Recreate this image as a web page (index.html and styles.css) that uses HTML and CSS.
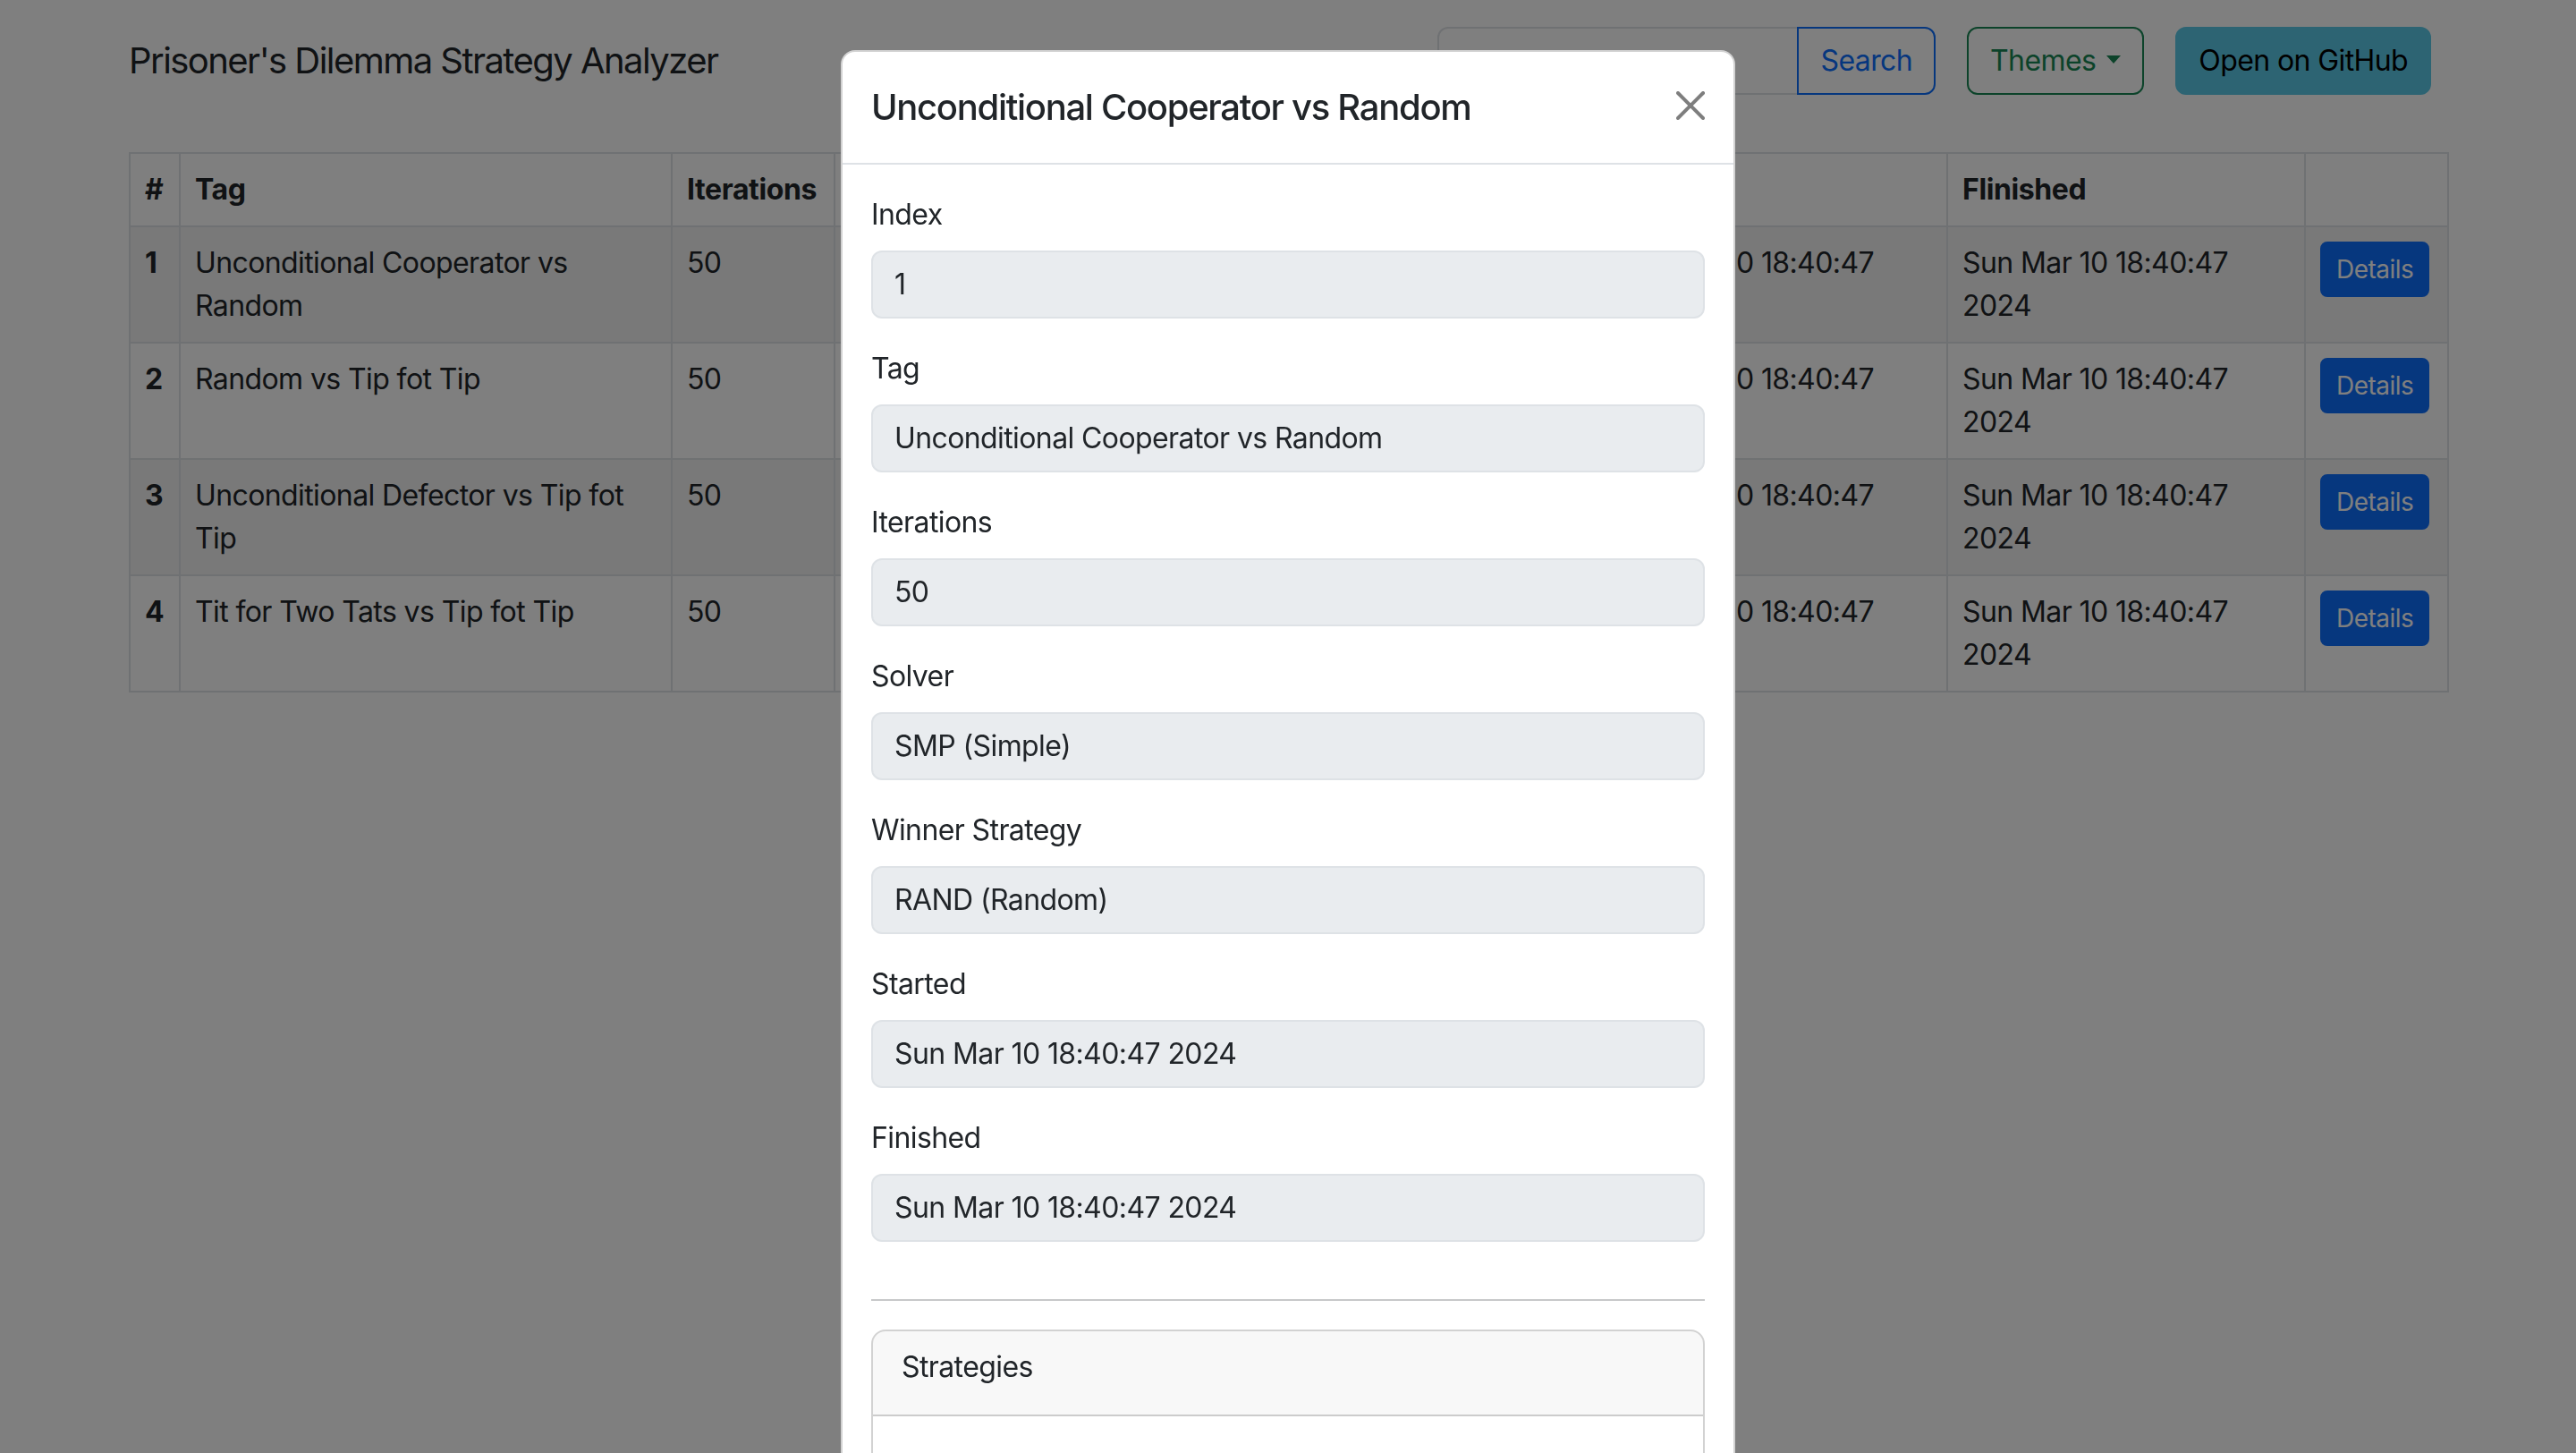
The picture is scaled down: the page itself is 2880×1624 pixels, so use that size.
FILE: index.html
```html
<!DOCTYPE html>
<html lang="en">
<head>
<meta charset="utf-8">
<title>Prisoner's Dilemma Strategy Analyzer</title>
<link rel="stylesheet" href="styles.css">
</head>
<body>
<header class="navbar">
  <div class="container nav-inner">
    <a class="brand" href="#">Prisoner's Dilemma Strategy Analyzer</a>
    <div class="nav-tools">
      <form class="search-group">
        <input class="search-input" type="search" aria-label="Search">
        <button class="btn btn-outline-primary" type="button">Search</button>
      </form>
      <button class="btn btn-outline-success dropdown-toggle" type="button">Themes</button>
      <a class="btn btn-info" href="#">Open on GitHub</a>
    </div>
  </div>
</header>

<main class="container">
  <table class="table">
    <colgroup>
      <col class="c-num"><col class="c-tag"><col class="c-iter"><col class="c-solver"><col class="c-winner"><col class="c-started"><col class="c-finished"><col class="c-action">
    </colgroup>
    <thead>
      <tr><th>#</th><th>Tag</th><th>Iterations</th><th>Solver</th><th>Winner Strategy</th><th>Started</th><th>Flinished</th><th></th></tr>
    </thead>
    <tbody>
      <tr><th>1</th><td>Unconditional Cooperator vs Random</td><td>50</td><td>SMP (Simple)</td><td>RAND (Random)</td><td>Sun Mar 10 18:40:47 2024</td><td>Sun Mar 10 18:40:47 2024</td><td><button class="btn btn-sm btn-primary" type="button">Details</button></td></tr>
      <tr><th>2</th><td>Random vs Tip fot Tip</td><td>50</td><td>SMP (Simple)</td><td>TFT (Tit for Tat)</td><td>Sun Mar 10 18:40:47 2024</td><td>Sun Mar 10 18:40:47 2024</td><td><button class="btn btn-sm btn-primary" type="button">Details</button></td></tr>
      <tr><th>3</th><td>Unconditional Defector vs Tip fot Tip</td><td>50</td><td>SMP (Simple)</td><td>UDEF (Unconditional Defector)</td><td>Sun Mar 10 18:40:47 2024</td><td>Sun Mar 10 18:40:47 2024</td><td><button class="btn btn-sm btn-primary" type="button">Details</button></td></tr>
      <tr><th>4</th><td>Tit for Two Tats vs Tip fot Tip</td><td>50</td><td>SMP (Simple)</td><td>TF2T (Tit for Two Tats)</td><td>Sun Mar 10 18:40:47 2024</td><td>Sun Mar 10 18:40:47 2024</td><td><button class="btn btn-sm btn-primary" type="button">Details</button></td></tr>
    </tbody>
  </table>
</main>

<div class="backdrop"></div>

<div class="modal">
  <div class="modal-dialog">
    <div class="modal-content">
      <div class="modal-header">
        <h5 class="modal-title">Unconditional Cooperator vs Random</h5>
        <button class="btn-close" type="button" aria-label="Close">
          <svg viewBox="0 0 16 16"><path d="M.293.293a1 1 0 0 1 1.414 0L8 6.586 14.293.293a1 1 0 1 1 1.414 1.414L9.414 8l6.293 6.293a1 1 0 0 1-1.414 1.414L8 9.414l-6.293 6.293a1 1 0 0 1-1.414-1.414L6.586 8 .293 1.707a1 1 0 0 1 0-1.414z"/></svg>
        </button>
      </div>
      <div class="modal-body">
        <form class="details-form">
          <div class="field"><label class="field-label">Index</label><input class="field-input" type="text" value="1" readonly></div>
          <div class="field"><label class="field-label">Tag</label><input class="field-input" type="text" value="Unconditional Cooperator vs Random" readonly></div>
          <div class="field"><label class="field-label">Iterations</label><input class="field-input" type="text" value="50" readonly></div>
          <div class="field"><label class="field-label">Solver</label><input class="field-input" type="text" value="SMP (Simple)" readonly></div>
          <div class="field"><label class="field-label">Winner Strategy</label><input class="field-input" type="text" value="RAND (Random)" readonly></div>
          <div class="field"><label class="field-label">Started</label><input class="field-input" type="text" value="Sun Mar 10 18:40:47 2024" readonly></div>
          <div class="field"><label class="field-label">Finished</label><input class="field-input" type="text" value="Sun Mar 10 18:40:47 2024" readonly></div>
        </form>
        <hr class="divider">
        <div class="card">
          <div class="card-header">Strategies</div>
          <div class="card-body"></div>
        </div>
      </div>
    </div>
  </div>
</div>
</body>
</html>
```

FILE: styles.css
```css
* { box-sizing: border-box; }

html, body {
  margin: 0;
  height: 100%;
}

body {
  font-family: Inter, "Liberation Sans", sans-serif;
  font-size: 32px;
  line-height: 48px;
  letter-spacing: -0.6px;
  color: #212529;
  background: #fff;
  overflow: hidden;
}

.container {
  width: 2640px;
  margin: 0 auto;
  padding: 0 24px;
}

/* Navbar */
.navbar {
  padding-top: 30px;
  margin-bottom: 64px;
}

.nav-inner {
  display: flex;
  align-items: center;
  justify-content: space-between;
}

.brand {
  font-size: 40px;
  line-height: 60px;
  letter-spacing: -1.55px;
  color: #212529;
  text-decoration: none;
}

.nav-tools {
  display: flex;
  align-items: center;
  gap: 35px;
  padding-right: 18px;
}

.search-group {
  display: flex;
  margin: 0;
}

.search-input {
  width: 404px;
  height: 76px;
  padding: 12px 24px;
  font: inherit;
  color: #212529;
  background: #fff;
  border: 2px solid #dee2e6;
  border-radius: 12px 0 0 12px;
  outline: none;
}

.btn {
  display: inline-block;
  font-family: inherit;
  font-size: 32px;
  line-height: 48px;
  font-weight: 400;
  letter-spacing: -0.6px;
  padding: 12px 24px;
  border: 2px solid transparent;
  border-radius: 12px;
  background: transparent;
  text-decoration: none;
  white-space: nowrap;
  cursor: pointer;
}

.search-group .btn {
  border-radius: 0 12px 12px 0;
  margin-left: -2px;
}

.btn-outline-primary { color: #0d6efd; border-color: #0d6efd; }
.btn-outline-success { color: #198754; border-color: #198754; }
.btn-info { color: #000; background: #5bc8e6; border-color: #5bc8e6; }
.btn-primary { color: #fff; background: #0d6efd; border-color: #0d6efd; }

.btn-sm {
  font-size: 28px;
  line-height: 42px;
  letter-spacing: -0.5px;
  padding: 8px 16px;
  border-radius: 8px;
}

.dropdown-toggle::after {
  content: "";
  display: inline-block;
  margin-left: 12px;
  vertical-align: 8px;
  border-top: 9px solid;
  border-right: 8px solid transparent;
  border-left: 8px solid transparent;
  border-bottom: 0;
}

/* Table */
.table {
  width: 100%;
  border-collapse: collapse;
  table-layout: fixed;
  border: 2px solid #dee2e6;
}

.c-num { width: 56px; }
.c-tag { width: 550px; }
.c-iter { width: 182px; }
.c-solver { width: 424px; }
.c-winner { width: 424px; }
.c-started { width: 396px; }
.c-finished { width: 400px; }
.c-action { width: 160px; }

.table th,
.table td {
  border: 2px solid #dee2e6;
  padding: 16px;
  text-align: left;
  vertical-align: top;
}

.table th {
  font-weight: 700;
  letter-spacing: -0.4px;
}

.table tbody tr:nth-child(odd) > * {
  background: rgba(0, 0, 0, .05);
}

/* Modal */
.backdrop {
  position: fixed;
  inset: 0;
  background: rgba(0, 0, 0, .5);
}

.modal {
  position: fixed;
  inset: 0;
  overflow: hidden;
}

.modal-dialog {
  width: 1000px;
  margin: 56px auto;
}

.modal-content {
  background: #fff;
  border: 2px solid rgba(0, 0, 0, .175);
  border-radius: 16px;
}

.modal-header {
  display: flex;
  align-items: center;
  padding: 32px;
  border-bottom: 2px solid #dee2e6;
}

.modal-title {
  margin: 0;
  font-size: 40px;
  line-height: 60px;
  font-weight: 500;
  letter-spacing: -1.3px;
}

.btn-close {
  display: flex;
  margin: -18px -8px -14px auto;
  padding: 8px;
  width: 48px;
  height: 48px;
  border: 0;
  background: transparent;
  opacity: .5;
  cursor: pointer;
}

.btn-close svg {
  display: block;
  width: 32px;
  height: 32px;
  fill: #000;
}

.modal-body {
  padding: 32px;
}

.details-form {
  display: flow-root;
  margin: 0;
}

.field { margin-bottom: 32px; }

.field-label {
  display: block;
  margin-bottom: 16px;
}

.field-input {
  display: block;
  width: 100%;
  padding: 12px 24px;
  font: inherit;
  letter-spacing: inherit;
  color: #212529;
  background: #e9ecef;
  border: 2px solid #dee2e6;
  border-radius: 12px;
  outline: none;
}

.divider {
  margin: 32px 0;
  border: 0;
  border-top: 2px solid;
  color: inherit;
  opacity: .25;
}

.card {
  border: 2px solid rgba(0, 0, 0, .175);
  border-radius: 16px;
  overflow: hidden;
}

.card-header {
  padding: 16px 32px 29px;
  background: rgba(33, 37, 41, .03);
  border-bottom: 2px solid rgba(0, 0, 0, .175);
}

.card-body {
  min-height: 240px;
  padding: 32px;
}
```
